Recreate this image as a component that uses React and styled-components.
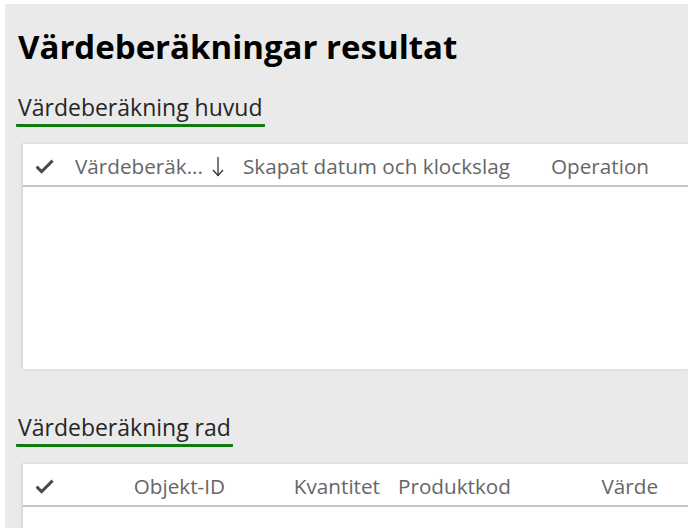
import React from "react"
import styled, { createGlobalStyle } from "styled-components"

const GlobalStyle = createGlobalStyle`
  html, body {
    margin: 0;
    padding: 0;
    background: #ffffff;
    font-family: "Open Sans", "Noto Sans", sans-serif;
  }
`

const Page = styled.div`
  margin: 4px 11px 0 5px;
  padding: 0 0 0 13px;
  height: 524px;
  overflow: hidden;
  background: #eaeaea;
`

const Title = styled.h1`
  margin: 0;
  padding-top: 23px;
  font-size: 33px;
  line-height: 40px;
  font-weight: 700;
  color: #000;
`

const Section = styled.section`
  margin-top: ${props => props.top}px;
`

const Tab = styled.div`
  display: inline-block;
  margin-left: -2px;
  padding: 0 2px 2px;
  border-bottom: 3px solid #107c10;
  border-radius: 1px;
  font-size: 23px;
  line-height: 30px;
  color: #262626;
`

const Grid = styled.div`
  margin: 17px 0 0 5px;
  height: ${props => props.height}px;
  background: #ffffff;
  box-shadow: -1px 0 3px rgba(0, 0, 0, 0.12);
`

const HeaderRow = styled.div`
  display: flex;
  align-items: center;
  box-sizing: border-box;
  height: 43px;
  padding-top: 3px;
  border-bottom: 2px solid #c6c6c6;
  font-size: 20.7px;
  color: #666;
  white-space: nowrap;
`

const CheckCell = styled.div`
  flex: none;
  width: 52px;
  box-sizing: border-box;
  padding: 0 0 0 12px;
  display: flex;
`

const Cell = styled.div`
  flex: none;
  box-sizing: border-box;
  width: ${props => props.width}px;
  padding-left: ${props => props.indent || 0}px;
  display: flex;
  align-items: center;
  justify-content: ${props =>
    props.align === "right" ? "flex-end" : "flex-start"};
`

const Label = styled.span`
  flex: 1;
  overflow: hidden;
  text-overflow: ellipsis;
  white-space: nowrap;
`

const SortArrow = styled.svg`
  flex: none;
  margin-right: 19px;
`

const Check = () => (
  <svg width="19" height="15" viewBox="0 0 19 15">
    <polyline
      points="1.6,7.6 6.6,12.6 17.6,1.6"
      fill="none"
      stroke="#4a4a4a"
      strokeWidth="2.9"
    />
  </svg>
)

export default function App() {
  return (
    <>
      <GlobalStyle />
      <Page>
        <Title>Värdeberäkningar resultat</Title>
        <Section top={25}>
          <Tab>Värdeberäkning huvud</Tab>
          <Grid height={225}>
            <HeaderRow>
              <CheckCell>
                <Check />
              </CheckCell>
              <Cell width={168}>
                <Label>Värdeberäk...</Label>
                <SortArrow width="12" height="21" viewBox="0 0 12 21">
                  <line x1="6" y1="1" x2="6" y2="19.5" stroke="#333" strokeWidth="1.3" />
                  <polyline points="1,14 6,19.5 11,14" fill="none" stroke="#333" strokeWidth="1.3" />
                </SortArrow>
              </Cell>
              <Cell width={308}>Skapat datum och klockslag</Cell>
              <Cell width={120}>Operation</Cell>
            </HeaderRow>
          </Grid>
        </Section>
        <Section top={43}>
          <Tab>Värdeberäkning rad</Tab>
          <Grid height={80}>
            <HeaderRow>
              <CheckCell>
                <Check />
              </CheckCell>
              <Cell width={150} align="right">Objekt-ID</Cell>
              <Cell width={155} align="right">Kvantitet</Cell>
              <Cell width={160} indent={18}>Produktkod</Cell>
              <Cell width={118} align="right">Värde</Cell>
            </HeaderRow>
          </Grid>
        </Section>
      </Page>
    </>
  )
}
